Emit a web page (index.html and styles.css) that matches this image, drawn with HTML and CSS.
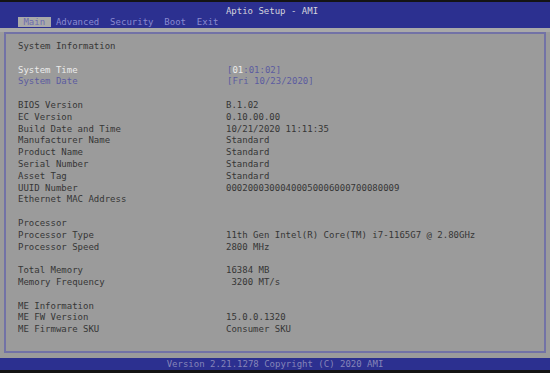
FILE: index.html
```html
<!DOCTYPE html>
<html lang="en">
<head>
    <meta charset="UTF-8">
    <meta name="viewport" content="width=device-width, initial-scale=1.0">
    <title>Aptio Setup - AMI</title>
    <link rel="stylesheet" href="styles.css">
</head>
<body>
    <div class="screen">
        <div class="header">
            <div class="title">Aptio Setup - AMI</div>
            <div class="tabs"><span class="tab active"> Main </span><span class="tab"> Advanced </span><span class="tab"> Security </span><span class="tab"> Boot </span><span class="tab"> Exit </span></div>
        </div>
        <div class="band"></div>

        <div class="panel">
            <div class="row"><span>System Information</span></div>
            <div class="row blank"></div>
            <div class="row">
                <span class="label-active">System Time</span>
                <span class="setting">[<span class="cursor">01</span>:01:02]</span>
            </div>
            <div class="row">
                <span class="label-setting">System Date</span>
                <span class="setting">[Fri 10/23/2020]</span>
            </div>
            <div class="row blank"></div>
            <div class="row"><span>BIOS Version</span><span class="value">B.1.02</span></div>
            <div class="row"><span>EC Version</span><span class="value">0.10.00.00</span></div>
            <div class="row"><span>Build Date and Time</span><span class="value">10/21/2020 11:11:35</span></div>
            <div class="row"><span>Manufacturer Name</span><span class="value">Standard</span></div>
            <div class="row"><span>Product Name</span><span class="value">Standard</span></div>
            <div class="row"><span>Serial Number</span><span class="value">Standard</span></div>
            <div class="row"><span>Asset Tag</span><span class="value">Standard</span></div>
            <div class="row"><span>UUID Number</span><span class="value">00020003000400050006000700080009</span></div>
            <div class="row"><span>Ethernet MAC Address</span><span class="value"></span></div>
            <div class="row blank"></div>
            <div class="row"><span>Processor</span></div>
            <div class="row"><span>Processor Type</span><span class="value">11th Gen Intel(R) Core(TM) i7-1165G7 @ 2.80GHz</span></div>
            <div class="row"><span>Processor Speed</span><span class="value">2800 MHz</span></div>
            <div class="row blank"></div>
            <div class="row"><span>Total Memory</span><span class="value">16384 MB</span></div>
            <div class="row"><span>Memory Frequency</span><span class="value"> 3200 MT/s</span></div>
            <div class="row blank"></div>
            <div class="row"><span>ME Information</span></div>
            <div class="row"><span>ME FW Version</span><span class="value">15.0.0.1320</span></div>
            <div class="row"><span>ME Firmware SKU</span><span class="value">Consumer SKU</span></div>
        </div>

        <div class="footer">Version 2.21.1278 Copyright (C) 2020 AMI</div>
    </div>
</body>
</html>
```

FILE: styles.css
```css
body {
    margin: 0;
    background: #ffffff;
    font-family: "DejaVu Sans Mono", "Liberation Mono", monospace;
    font-size: 9px;
}
.screen {
    width: 550px;
    height: 373px;
    background: #9b9b9b;
    border-top: 2px solid #141414;
    border-bottom: 3px solid #141414;
    box-sizing: border-box;
    display: flex;
    flex-direction: column;
}
.header {
    height: 26px;
    flex-shrink: 0;
    background: #2c3090;
    padding-top: 4px;
    box-sizing: border-box;
}
.title {
    height: 10px;
    line-height: 10px;
    text-align: center;
    color: #d4d4dc;
    padding-right: 6px;
}
.tabs {
    padding-left: 18px;
    height: 12px;
    line-height: 12px;
}
.tab {
    color: #8a8ad0;
    white-space: pre;
}
.tab.active {
    background: #a9a9a9;
    color: #6c6cb0;
}
.band {
    height: 4px;
    flex-shrink: 0;
    background: #a9a9a9;
}
.panel {
    margin: 0 4px;
    height: 321px;
    flex-shrink: 0;
    border: 2px solid #7272a6;
    box-sizing: border-box;
    padding: 7px 0 0 12px;
    color: #363636;
}
.row {
    display: grid;
    grid-template-columns: 208px 1fr;
    height: 11.8px;
    line-height: 11.8px;
    white-space: pre;
}
.label-active {
    color: #ececec;
}
.label-setting {
    color: #5c5ca0;
}
.setting {
    color: #5c5ca0;
    padding-left: 1px;
}
.cursor {
    color: #ececec;
}
.footer {
    margin-top: 5px;
    height: 12px;
    line-height: 12px;
    background: #2c3090;
    color: #8585b8;
    text-align: center;
}
```
